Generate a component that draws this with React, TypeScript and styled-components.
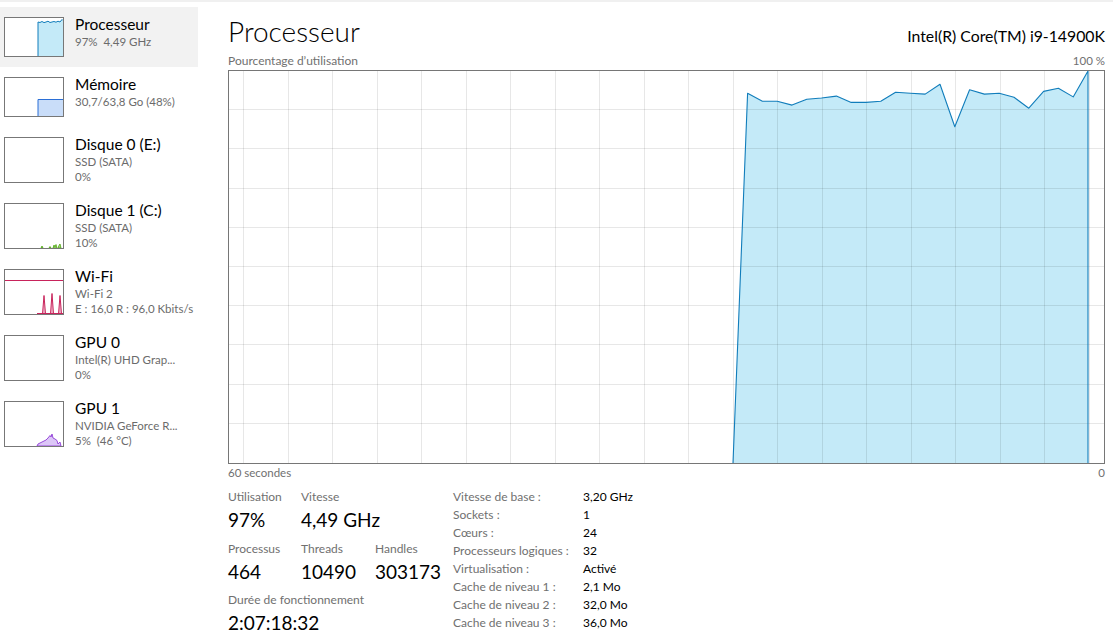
import React from "react";
import styled, { createGlobalStyle } from "styled-components";

const GlobalStyle = createGlobalStyle`
  html, body { margin: 0; padding: 0; background: #ffffff; }
  body {
    font-family: Lato, "Open Sans", "Noto Sans", sans-serif;
    color: #000000;
  }
`;

const Page = styled.div`
  width: 1113px;
  height: 641px;
  overflow: hidden;
  box-sizing: border-box;
  border-top: 2px solid #f0f0f0;
  display: flex;
`;

/* ---------- left navigation ---------- */

const Sidebar = styled.nav`
  width: 198px;
  flex: none;
  padding-top: 5px;
  display: flex;
  flex-direction: column;
`;

const NavItem = styled.div<{ $active?: boolean; $tall?: boolean }>`
  display: flex;
  align-items: flex-start;
  gap: 11px;
  box-sizing: border-box;
  height: ${(p) => (p.$tall ? 66 : 60)}px;
  padding: 8px 0 0 4px;
  background: ${(p) => (p.$active ? "#f2f2f2" : "transparent")};
`;

const Thumb = styled.div<{ $tall?: boolean }>`
  flex: none;
  width: 60px;
  height: ${(p) => (p.$tall ? 46 : 40)}px;
  margin-top: 2px;
  box-sizing: border-box;
  border: 1px solid #777777;
  background: #ffffff;

  svg {
    display: block;
  }
`;

const NavText = styled.div`
  display: flex;
  flex-direction: column;
  white-space: nowrap;
`;

const NavName = styled.div`
  font-size: 15.5px;
  line-height: 19px;
  color: #000000;
`;

const NavSub = styled.div`
  font-size: 11.5px;
  line-height: 15px;
  color: #6b6b6b;
`;

/* ---------- main panel ---------- */

const Main = styled.main`
  flex: 1;
  min-width: 0;
  display: flex;
  flex-direction: column;
  padding: 11px 8px 0 30px;
`;

const Header = styled.header`
  display: flex;
  justify-content: space-between;
  align-items: baseline;
  height: 36px;
`;

const Title = styled.h1`
  margin: 0;
  font-size: 28px;
  font-weight: 300;
  line-height: 36px;
  color: #000000;
`;

const CpuName = styled.div`
  font-size: 15.8px;
  line-height: 20px;
  color: #000000;
`;

const AxisRow = styled.div<{ $top: number }>`
  display: flex;
  justify-content: space-between;
  margin-top: ${(p) => p.$top}px;
  font-size: 11.5px;
  line-height: 16px;
  color: #707070;
`;

const AxisCaption = styled.span<{ $size?: number }>`
  font-size: ${(p) => p.$size ?? 11.5}px;
`;

const ChartFrame = styled.div`
  height: 394px;
  margin-top: 1px;
  box-sizing: border-box;
  border: 1px solid #767676;

  svg {
    display: block;
    width: 100%;
    height: 100%;
  }
`;

const Stats = styled.section`
  display: flex;
  margin-top: 7px;
`;

const LiveGrid = styled.div`
  display: grid;
  grid-template-columns: 73px 74px 78px;
  row-gap: 5.5px;
  align-content: start;
`;

const Stat = styled.div<{ $span?: number }>`
  display: flex;
  flex-direction: column;
  grid-column: span ${(p) => p.$span ?? 1};
  white-space: nowrap;
`;

const StatLabel = styled.div`
  font-size: 12px;
  line-height: 18px;
  height: 18px;
  color: #707070;
`;

const StatValue = styled.div`
  font-size: 19px;
  line-height: 28px;
  height: 28px;
  color: #000000;
`;

const Specs = styled.dl`
  display: grid;
  grid-template-columns: 130px auto;
  grid-auto-rows: 18px;
  margin: 0;
  font-size: 12px;
  line-height: 18px;
  white-space: nowrap;

  dt {
    color: #707070;
  }

  dd {
    margin: 0;
    color: #000000;
  }
`;

/* ---------- drawings ---------- */

const CPU_LINE = "#117dbb";
const CPU_FILL = "#c4eaf8";

// usage samples (%), one per second, newest last
const cpuHistory = [
  94.3, 92.3, 92.3, 91.3, 92.8, 93.1, 93.6, 92.0, 92.0, 92.3, 94.6, 94.3,
  94.1, 96.6, 85.8, 95.2, 94.1, 94.3, 93.3, 90.5, 94.8, 95.6, 93.4, 100,
];

const CpuChart: React.FC = () => {
  const w = 875;
  const h = 392;
  const last = 859;
  const step = 14.8;
  const pts = cpuHistory.map((v, i) => {
    const x = last - (cpuHistory.length - 1 - i) * step;
    const y = h * (1 - v / 100);
    return `${x.toFixed(1)},${y.toFixed(1)}`;
  });
  const start = `504,${h}`;
  const end = `${last},${h}`;
  const hLines = Array.from({ length: 9 }, (_, k) => Math.round((k + 1) * 39.2) - 0.5);
  const vLines = Array.from({ length: 20 }, (_, k) => Math.round(14.3 + k * 44.5) + 0.5);

  return (
    <svg viewBox={`0 0 ${w} ${h}`} preserveAspectRatio="none">
      <polygon points={[start, ...pts, end].join(" ")} fill={CPU_FILL} />
      <g stroke="rgba(0,0,0,0.095)" strokeWidth="1" shapeRendering="crispEdges">
        {hLines.map((y) => (
          <line key={`h${y}`} x1="0" x2={w} y1={y} y2={y} />
        ))}
        {vLines.map((x) => (
          <line key={`v${x}`} x1={x} x2={x} y1="0" y2={h} />
        ))}
      </g>
      <polyline
        points={[start, ...pts, end].join(" ")}
        fill="none"
        stroke={CPU_LINE}
        strokeWidth="1.1"
        strokeLinejoin="round"
      />
    </svg>
  );
};

const CpuMini = () => (
  <svg width="58" height="38" viewBox="0 0 58 38">
    <polygon
      points="33,38 33,4 35,4.5 37,3.5 39,4.6 41,4 43,3.2 45,4.5 47,4 49,3.5 51,4.2 53,3.2 55,4 57,1.5 58,2.5 58,38"
      fill={CPU_FILL}
    />
    <polyline
      points="33,38 33,4 35,4.5 37,3.5 39,4.6 41,4 43,3.2 45,4.5 47,4 49,3.5 51,4.2 53,3.2 55,4 57,1.5 58,2.5"
      fill="none"
      stroke={CPU_LINE}
      strokeWidth="1"
    />
  </svg>
);

const MemoryMini = () => (
  <svg width="58" height="38" viewBox="0 0 58 38">
    <rect x="33" y="21" width="25" height="17" fill="#c9ddf9" />
    <polyline points="33,38 33,21.5 58,21.5" fill="none" stroke="#2b6fd6" strokeWidth="1" />
  </svg>
);

const DiskMini = () => (
  <svg width="58" height="44" viewBox="0 0 58 44">
    <g fill="#a9d88c" stroke="#4da60c" strokeWidth="0.8">
      <polygon points="36,44 37,42 38,44" />
      <polygon points="44,44 45,42.5 46,44" />
      <polygon points="48,44 49,41 50,43 51,40.5 52,44" />
      <polygon points="53,44 54,41.5 55,40 56,44" />
    </g>
  </svg>
);

const WifiMini = () => (
  <svg width="58" height="44" viewBox="0 0 58 44">
    <line x1="0" x2="58" y1="10.5" y2="10.5" stroke="#c8235b" strokeWidth="1" />
    <g fill="#f0b7cb" stroke="#c8235b" strokeWidth="1">
      <polygon points="37.5,44 39,25.5 40.5,44" />
      <polygon points="45.5,44 47,23.5 48.5,44" />
      <polygon points="53.5,44 55,25.5 56.5,44" />
    </g>
    <line x1="32" x2="58" y1="43.5" y2="43.5" stroke="#c8235b" strokeWidth="1" />
  </svg>
);

const EmptyMini: React.FC<{ h: number }> = ({ h }) => <svg width="58" height={h} />;

const GpuMini = () => (
  <svg width="58" height="44" viewBox="0 0 58 44">
    <polygon
      points="32,44 33,42 36,40.5 39,39 41,38 43,36 45,33.5 46,35 47,32 48,36 50,37 52,38.5 53,42 55,40 56,44"
      fill="#dcc6f7"
      stroke="#8e3bd6"
      strokeWidth="0.9"
      strokeLinejoin="round"
    />
  </svg>
);

/* ---------- data ---------- */

type Resource = {
  name: string;
  lines: string[];
  chart: React.ReactNode;
  active?: boolean;
};

const resources: Resource[] = [
  { name: "Processeur", lines: ["97%\u00a0 4,49 GHz"], chart: <CpuMini />, active: true },
  { name: "Mémoire", lines: ["30,7/63,8 Go (48%)"], chart: <MemoryMini /> },
  { name: "Disque 0 (E:)", lines: ["SSD (SATA)", "0%"], chart: <EmptyMini h={44} /> },
  { name: "Disque 1 (C:)", lines: ["SSD (SATA)", "10%"], chart: <DiskMini /> },
  { name: "Wi-Fi", lines: ["Wi-Fi 2", "E : 16,0 R : 96,0 Kbits/s"], chart: <WifiMini /> },
  { name: "GPU 0", lines: ["Intel(R) UHD Grap...", "0%"], chart: <EmptyMini h={44} /> },
  { name: "GPU 1", lines: ["NVIDIA GeForce R...", "5%\u00a0 (46 °C)"], chart: <GpuMini /> },
];

const specs: [string, string][] = [
  ["Vitesse de base :", "3,20 GHz"],
  ["Sockets :", "1"],
  ["Cœurs :", "24"],
  ["Processeurs logiques :", "32"],
  ["Virtualisation :", "Activé"],
  ["Cache de niveau 1 :", "2,1 Mo"],
  ["Cache de niveau 2 :", "32,0 Mo"],
  ["Cache de niveau 3 :", "36,0 Mo"],
];

export default function App() {
  return (
    <>
      <GlobalStyle />
      <Page>
        <Sidebar>
          {resources.map((r) => {
            const tall = r.lines.length > 1;
            return (
              <NavItem key={r.name} $active={r.active} $tall={tall}>
                <Thumb $tall={tall}>{r.chart}</Thumb>
                <NavText>
                  <NavName>{r.name}</NavName>
                  {r.lines.map((l) => (
                    <NavSub key={l}>{l}</NavSub>
                  ))}
                </NavText>
              </NavItem>
            );
          })}
        </Sidebar>

        <Main>
          <Header>
            <Title>Processeur</Title>
            <CpuName>Intel(R) Core(TM) i9-14900K</CpuName>
          </Header>
          <AxisRow $top={4}>
            <AxisCaption $size={12}>Pourcentage d’utilisation</AxisCaption>
            <AxisCaption>100 %</AxisCaption>
          </AxisRow>
          <ChartFrame>
            <CpuChart />
          </ChartFrame>
          <AxisRow $top={1}>
            <AxisCaption>60 secondes</AxisCaption>
            <AxisCaption>0</AxisCaption>
          </AxisRow>

          <Stats>
            <LiveGrid>
              <Stat>
                <StatLabel>Utilisation</StatLabel>
                <StatValue>97%</StatValue>
              </Stat>
              <Stat $span={2}>
                <StatLabel>Vitesse</StatLabel>
                <StatValue>4,49 GHz</StatValue>
              </Stat>
              <Stat>
                <StatLabel>Processus</StatLabel>
                <StatValue>464</StatValue>
              </Stat>
              <Stat>
                <StatLabel>Threads</StatLabel>
                <StatValue>10490</StatValue>
              </Stat>
              <Stat>
                <StatLabel>Handles</StatLabel>
                <StatValue>303173</StatValue>
              </Stat>
              <Stat $span={3}>
                <StatLabel>Durée de fonctionnement</StatLabel>
                <StatValue>2:07:18:32</StatValue>
              </Stat>
            </LiveGrid>
            <Specs>
              {specs.map(([k, v]) => (
                <React.Fragment key={k}>
                  <dt>{k}</dt>
                  <dd>{v}</dd>
                </React.Fragment>
              ))}
            </Specs>
          </Stats>
        </Main>
      </Page>
    </>
  );
}
